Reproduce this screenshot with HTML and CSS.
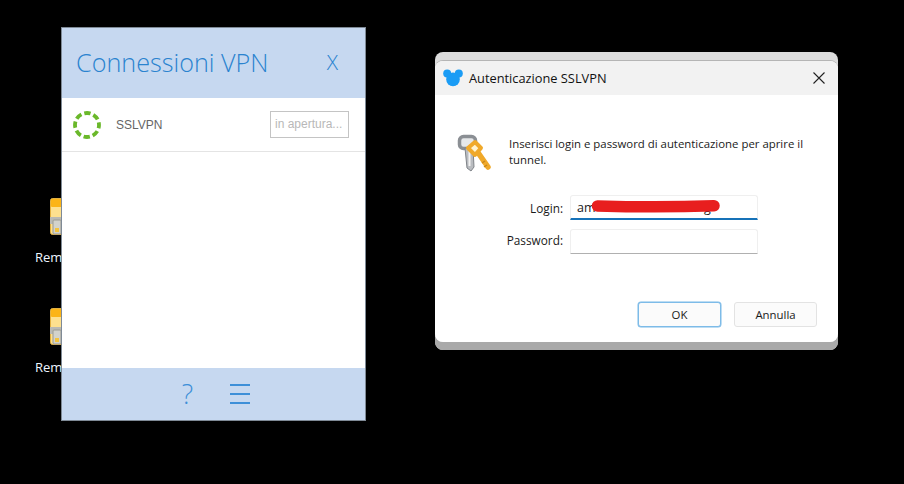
FILE: index.html
```html
<!DOCTYPE html>
<html lang="it">
<head>
    <meta charset="UTF-8">
    <title>Connessioni VPN</title>
    <link rel="stylesheet" href="styles.css">
</head>
<body>
    <div class="desktop">
        <!-- Desktop icons behind the VPN window -->
        <div class="desk-icon desk-icon-1">
            <svg class="zip-icon" width="44" height="38" viewBox="0 0 44 38">
                <rect x="0.5" y="0.5" width="43" height="36" rx="2" fill="#fde08f" stroke="#e2b040"/>
                <rect x="1" y="1" width="42" height="8" rx="1" fill="#fbb417"/>
                <rect x="0" y="19" width="14" height="7" fill="#b9b9b4"/>
                <rect x="3" y="22" width="8" height="14" rx="1" fill="#d2d2cb" stroke="#9a9a92"/>
                <rect x="5" y="30" width="4" height="4" fill="#f3c33e"/>
            </svg>
            <span class="desk-label">Remote</span>
        </div>
        <div class="desk-icon desk-icon-2">
            <svg class="zip-icon" width="44" height="38" viewBox="0 0 44 38">
                <rect x="0.5" y="0.5" width="43" height="36" rx="2" fill="#fde08f" stroke="#e2b040"/>
                <rect x="1" y="1" width="42" height="8" rx="1" fill="#fbb417"/>
                <rect x="0" y="19" width="14" height="7" fill="#b9b9b4"/>
                <rect x="3" y="22" width="8" height="14" rx="1" fill="#d2d2cb" stroke="#9a9a92"/>
                <rect x="5" y="30" width="4" height="4" fill="#f3c33e"/>
            </svg>
            <span class="desk-label">Remote</span>
        </div>

        <!-- VPN connections window -->
        <div class="vpn-window">
            <div class="vpn-header">
                <span class="vpn-title">Connessioni VPN</span>
                <span class="vpn-close">X</span>
            </div>
            <div class="vpn-row">
                <svg class="vpn-spinner" width="30" height="30" viewBox="0 0 30 30">
                    <circle cx="15" cy="15" r="12" fill="none" stroke="#6ab82a" stroke-width="3.8" stroke-dasharray="6.4 3" stroke-dashoffset="3"/>
                </svg>
                <span class="vpn-name">SSLVPN</span>
                <span class="vpn-status">in apertura...</span>
            </div>
            <div class="vpn-body"></div>
            <div class="vpn-footer">
                <span class="vpn-help">?</span>
                <div class="vpn-menu"><i></i><i></i><i></i></div>
            </div>
        </div>

        <!-- Login dialog, with the window behind it peeking out -->
        <div class="dialog-back"></div>
        <div class="dialog">
            <div class="dialog-titlebar">
                <svg class="dialog-logo" width="20" height="18" viewBox="0 0 20 18">
                    <circle cx="4.2" cy="4.4" r="4" fill="#1a9cf5"/>
                    <circle cx="15.8" cy="4.4" r="4" fill="#1a9cf5"/>
                    <circle cx="10" cy="10.4" r="6.8" fill="#1a9cf5"/>
                </svg>
                <span class="dialog-title">Autenticazione SSLVPN</span>
                <svg class="dialog-x" width="12" height="12" viewBox="0 0 12 12">
                    <path d="M0.5 0.5 L11.5 11.5 M11.5 0.5 L0.5 11.5" stroke="#222" stroke-width="1.1" fill="none"/>
                </svg>
            </div>
            <div class="dialog-body">
                <div class="dialog-intro">
                    <svg class="keys-icon" width="36" height="38" viewBox="0 0 36 38">
                        <!-- grey key -->
                        <rect x="2.5" y="2.5" width="16" height="12" rx="4" fill="#e6e8ea" stroke="#8b8f94" stroke-width="3.5"/>
                        <path d="M8 14 h8 l1 19 l-3 4 l-4 -3 z" fill="#b9bcc0" stroke="#7f8388" stroke-width="1"/>
                        <path d="M12.5 16 v16" stroke="#f2f2f2" stroke-width="2"/>
                        <!-- gold key -->
                        <path d="M11 14 l7 -6 l6 6 l-6 7 z" fill="#fff3d0" stroke="#f0a92a" stroke-width="4" stroke-linejoin="round"/>
                        <path d="M22 20 L31 33" stroke="#f0a92a" stroke-width="5.5" stroke-linecap="round"/>
                        <path d="M28 27 l-3 2 M30 31 l-3 2" stroke="#c98717" stroke-width="1.5"/>
                    </svg>
                    <p class="dialog-text">Inserisci login e password di autenticazione per aprire il tunnel.</p>
                </div>
                <div class="login-form">
                    <label class="field-label">Login:</label>
                    <div class="field field-active">
                        <span class="field-value">am</span>
                        <span class="field-tail">g</span>
                        <svg class="redaction" width="136" height="14" viewBox="0 0 136 14">
                            <path d="M6.5 6 C40 7 90 7 123 5.8" stroke="#e81e1e" stroke-width="11.5" stroke-linecap="round" fill="none"/>
                        </svg>
                    </div>
                    <label class="field-label field-label-raised">Password:</label>
                    <div class="field"></div>
                </div>
                <div class="dialog-buttons">
                    <button class="btn btn-default">OK</button>
                    <button class="btn">Annulla</button>
                </div>
            </div>
        </div>
    </div>
</body>
</html>
```

FILE: styles.css
```css
html, body {
    margin: 0;
    padding: 0;
    background: #000;
}
.desktop {
    position: relative;
    width: 904px;
    height: 484px;
    overflow: hidden;
    background: #000;
    font-family: "Open Sans", "Noto Sans", sans-serif;
}

/* desktop icons */
.desk-icon {
    position: absolute;
    left: 30px;
    width: 60px;
    display: flex;
    flex-direction: column;
    align-items: flex-start;
}
.desk-icon-1 { top: 198px; }
.desk-icon-2 { top: 308px; }
.zip-icon {
    margin-left: 20px;
}
.desk-label {
    margin: 13px 0 0 5px;
    color: #eef6ff;
    font-size: 13px;
    line-height: 16px;
}

/* vpn window */
.vpn-window {
    position: absolute;
    left: 61px;
    top: 27px;
    width: 303px;
    height: 392px;
    display: flex;
    flex-direction: column;
    background: #fff;
    border: 1px solid #7f8a96;
}
.vpn-header {
    height: 70px;
    display: flex;
    align-items: center;
    justify-content: space-between;
    padding: 0 27px 2px 14px;
    box-sizing: border-box;
    background: #c6d8f0;
    color: #2a83cf;
}
.vpn-title {
    font-size: 25.2px;
    font-weight: 300;
}
.vpn-close {
    font-size: 21px;
    font-weight: 300;
}
.vpn-row {
    height: 53px;
    display: flex;
    align-items: center;
    padding: 0 16px 0 10px;
    border-bottom: 1px solid #e4e4e4;
}
.vpn-name {
    margin-left: 14px;
    font-family: "Liberation Sans", Arial, sans-serif;
    font-size: 12px;
    color: #666;
}
.vpn-status {
    margin-left: auto;
    width: 79px;
    height: 27px;
    box-sizing: border-box;
    border: 1px solid #c4c4c4;
    padding-left: 4px;
    font-family: "Liberation Sans", Arial, sans-serif;
    font-size: 12px;
    line-height: 25px;
    color: #b8b8b8;
    white-space: nowrap;
    overflow: hidden;
}
.vpn-body {
    flex: 1;
}
.vpn-footer {
    height: 52px;
    display: flex;
    align-items: center;
    justify-content: center;
    gap: 37px;
    padding-left: 5px;
    background: #c6d8f0;
    color: #3d8fd8;
}
.vpn-help {
    font-size: 27px;
    font-weight: 300;
    line-height: 26px;
}
.vpn-menu {
    width: 20px;
    display: flex;
    flex-direction: column;
    gap: 7px;
}
.vpn-menu i {
    display: block;
    height: 2px;
    background: #3d8fd8;
}

/* login dialog */
.dialog-back {
    position: absolute;
    left: 435px;
    top: 52px;
    width: 403px;
    height: 298px;
    border-radius: 8px;
    background: #dcdcdc;
    box-shadow: inset 0 -8px 0 #a9a9a9;
}
.dialog {
    position: absolute;
    left: 435px;
    top: 61px;
    width: 403px;
    height: 281px;
    border-radius: 8px;
    overflow: hidden;
    background: #fff;
    display: flex;
    flex-direction: column;
    box-shadow: 0 -1px 0 #b5b5b5;
    font-size: 11.8px;
    color: #1a1a1a;
}
.dialog-titlebar {
    height: 34px;
    flex: none;
    display: flex;
    align-items: center;
    padding: 0 13px 0 8px;
    background: #f2f2f2;
}
.dialog-logo {
    flex: none;
}
.dialog-title {
    margin-left: 6px;
    font-size: 12.8px;
    color: #111;
}
.dialog-x {
    margin-left: auto;
}
.dialog-body {
    flex: 1;
    display: flex;
    flex-direction: column;
}
.dialog-intro {
    display: flex;
    align-items: flex-start;
    padding: 39px 20px 0 22px;
}
.keys-icon {
    flex: none;
    filter: blur(0.4px);
}
.dialog-text {
    margin: 2px 0 0 16px;
    font-size: 11.4px;
    line-height: 16px;
}
.login-form {
    display: grid;
    grid-template-columns: 128px 188px;
    column-gap: 7px;
    row-gap: 9px;
    align-items: center;
    margin-top: 23px;
}
.field-label {
    text-align: right;
}
.field-label-raised {
    margin-bottom: 3px;
}
.field {
    position: relative;
    height: 25px;
    box-sizing: border-box;
    border: 1px solid #efefef;
    border-bottom: 1px solid #b0b0b0;
    border-radius: 3px 3px 0 0;
    padding-left: 6px;
    line-height: 23px;
    background: #fff;
}
.field-active {
    border-bottom: 2px solid #1672b8;
}
.field-value {
    font-size: 12.5px;
}
.field-tail {
    position: absolute;
    left: 133px;
    top: 0;
    font-size: 12.5px;
}
.redaction {
    position: absolute;
    left: 20px;
    top: 4px;
}
.dialog-buttons {
    display: flex;
    justify-content: flex-end;
    gap: 13px;
    margin-top: 48px;
    padding-right: 21px;
}
.btn {
    width: 83px;
    height: 25px;
    padding: 0;
    border: 1px solid #e3e3e3;
    border-radius: 3px;
    background: #fbfbfb;
    font-family: "Open Sans", "Noto Sans", sans-serif;
    font-size: 11.4px;
    color: #1a1a1a;
}
.btn-default {
    border-color: #7dbbe8;
    box-shadow: 0 0 0 0.5px #7dbbe8;
}
```
